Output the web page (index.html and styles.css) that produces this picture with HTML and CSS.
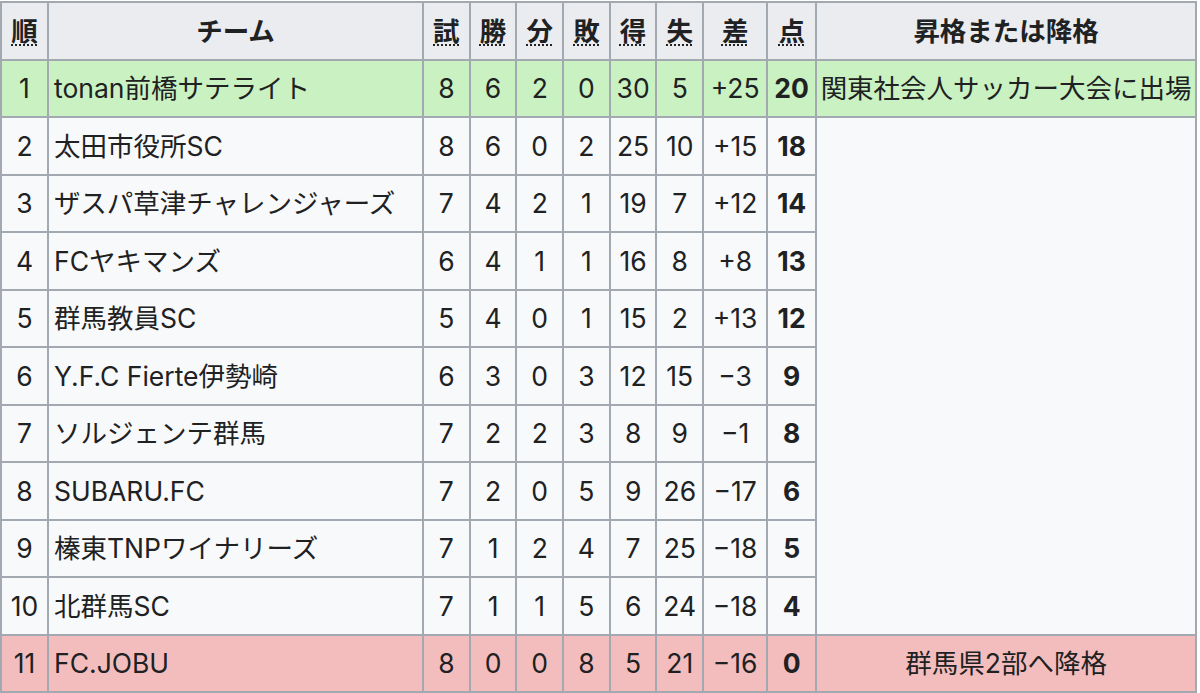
FILE: index.html
```html
<!DOCTYPE html>
<html lang="ja">
<head>
<meta charset="utf-8">
<title>順位表</title>
<link rel="stylesheet" href="styles.css">
</head>
<body>
<table class="standings">
  <colgroup>
    <col class="c-pos"><col class="c-team"><col class="c-n"><col class="c-n"><col class="c-n"><col class="c-n"><col class="c-n"><col class="c-n"><col class="c-gd"><col class="c-pts"><col class="c-note">
  </colgroup>
  <thead>
    <tr>
      <th><abbr>順</abbr></th>
      <th>チーム</th>
      <th><abbr>試</abbr></th>
      <th><abbr>勝</abbr></th>
      <th><abbr>分</abbr></th>
      <th><abbr>敗</abbr></th>
      <th><abbr>得</abbr></th>
      <th><abbr>失</abbr></th>
      <th><abbr>差</abbr></th>
      <th><abbr>点</abbr></th>
      <th>昇格または降格</th>
    </tr>
  </thead>
  <tbody>
    <tr class="promo">
      <td class="pos">1</td><td class="team">tonan前橋サテライト</td><td>8</td><td>6</td><td>2</td><td>0</td><td>30</td><td>5</td><td>+25</td><td class="pts">20</td><td class="note">関東社会人サッカー大会に出場</td>
    </tr>
    <tr>
      <td class="pos">2</td><td class="team">太田市役所SC</td><td>8</td><td>6</td><td>0</td><td>2</td><td>25</td><td>10</td><td>+15</td><td class="pts">18</td><td class="note" rowspan="9"></td>
    </tr>
    <tr>
      <td class="pos">3</td><td class="team">ザスパ草津チャレンジャーズ</td><td>7</td><td>4</td><td>2</td><td>1</td><td>19</td><td>7</td><td>+12</td><td class="pts">14</td>
    </tr>
    <tr>
      <td class="pos">4</td><td class="team">FCヤキマンズ</td><td>6</td><td>4</td><td>1</td><td>1</td><td>16</td><td>8</td><td>+8</td><td class="pts">13</td>
    </tr>
    <tr>
      <td class="pos">5</td><td class="team">群馬教員SC</td><td>5</td><td>4</td><td>0</td><td>1</td><td>15</td><td>2</td><td>+13</td><td class="pts">12</td>
    </tr>
    <tr>
      <td class="pos">6</td><td class="team">Y.F.C Fierte伊勢崎</td><td>6</td><td>3</td><td>0</td><td>3</td><td>12</td><td>15</td><td>−3</td><td class="pts">9</td>
    </tr>
    <tr>
      <td class="pos">7</td><td class="team">ソルジェンテ群馬</td><td>7</td><td>2</td><td>2</td><td>3</td><td>8</td><td>9</td><td>−1</td><td class="pts">8</td>
    </tr>
    <tr>
      <td class="pos">8</td><td class="team">SUBARU.FC</td><td>7</td><td>2</td><td>0</td><td>5</td><td>9</td><td>26</td><td>−17</td><td class="pts">6</td>
    </tr>
    <tr>
      <td class="pos">9</td><td class="team">榛東TNPワイナリーズ</td><td>7</td><td>1</td><td>2</td><td>4</td><td>7</td><td>25</td><td>−18</td><td class="pts">5</td>
    </tr>
    <tr>
      <td class="pos">10</td><td class="team">北群馬SC</td><td>7</td><td>1</td><td>1</td><td>5</td><td>6</td><td>24</td><td>−18</td><td class="pts">4</td>
    </tr>
    <tr class="releg">
      <td class="pos">11</td><td class="team">FC.JOBU</td><td>8</td><td>0</td><td>0</td><td>8</td><td>5</td><td>21</td><td>−16</td><td class="pts">0</td><td class="note">群馬県2部へ降格</td>
    </tr>
  </tbody>
</table>
</body>
</html>
```
FILE: styles.css
```css
html, body {
  margin: 0;
  padding: 0;
  background: #ffffff;
}

body {
  padding-top: 1px;
  font-family: Inter, "Noto Sans CJK JP", sans-serif;
  color: #202122;
}

.standings {
  border-collapse: collapse;
  table-layout: fixed;
  width: 1196px;
  background: #f8f9fa;
  font-size: 26.5px;
}

.c-pos { width: 47px; }
.c-team { width: 375px; }
.c-n { width: 46.7px; }
.c-gd { width: 64px; }
.c-pts { width: 49px; }
.c-note { width: 380px; }

.standings th,
.standings td {
  border: 2px solid #a2a9b1;
  height: 55.5px;
  padding: 0 2px;
  line-height: 30px;
  text-align: center;
  white-space: nowrap;
  overflow: hidden;
}

.standings th {
  background: #eaecf0;
  font-weight: bold;
}

.standings abbr {
  text-decoration: underline dotted;
  text-underline-offset: 4px;
  text-decoration-thickness: 2px;
}

.standings td.team {
  text-align: left;
  padding-left: 5px;
}

.standings td.pts {
  font-weight: bold;
}

.standings td.note {
  padding: 0 1px;
}

.promo td {
  background: #c9f1c1;
}

.releg td {
  background: #f4bdbd;
}
```
